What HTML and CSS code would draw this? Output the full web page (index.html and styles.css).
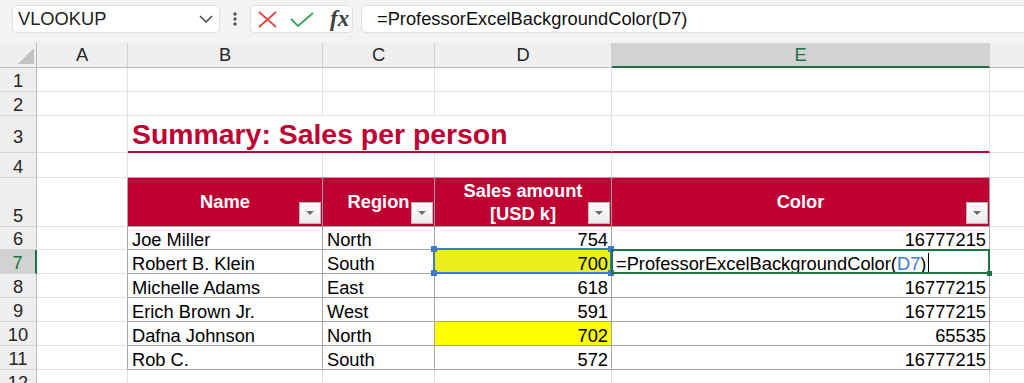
FILE: index.html
```html
<!DOCTYPE html>
<html lang="en">
<head>
  <meta charset="UTF-8">
  <meta name="viewport" content="width=device-width, initial-scale=1.0">
  <title>Summary: Sales per person</title>
  <link rel="stylesheet" href="styles.css">
</head>
<body>
  <!-- formula bar -->
  <div id="topbar">
    <div id="nameBox">
      <span>VLOOKUP</span>
      <svg width="14" height="8" viewBox="0 0 14 8"><polyline points="1,1 7,7 13,1" fill="none" stroke="#444" stroke-width="1.5"/></svg>
    </div>
    <div id="moreDots">
      <svg width="4" height="16" viewBox="0 0 4 16"><circle cx="2" cy="3" r="1.7" fill="#555"/><circle cx="2" cy="8" r="1.7" fill="#555"/><circle cx="2" cy="13" r="1.7" fill="#555"/></svg>
    </div>
    <div id="fxBox">
      <svg width="19" height="17" viewBox="0 0 19 17"><path d="M1 1 L18 16 M18 1 L1 16" stroke="#e2443c" stroke-width="1.7" fill="none"/></svg>
      <svg width="24" height="15" viewBox="0 0 24 15"><polyline points="1,7 8,14 23,1" fill="none" stroke="#3c9e5a" stroke-width="1.8"/></svg>
      <span class="fx">fx</span>
    </div>
    <div id="formulaInput">=ProfessorExcelBackgroundColor(D7)</div>
  </div>

  <!-- sheet -->
  <div id="sheet">
    <div class="corner"><svg width="16" height="16" viewBox="0 0 16 16"><polygon points="16,0 16,16 0,16" fill="#c2c2c2"/></svg></div>
    <div class="hd">A</div>
    <div class="hd">B</div>
    <div class="hd">C</div>
    <div class="hd">D</div>
    <div class="hd on">E</div>
    <div class="hd last"></div>

    <div class="rh">1</div>
    <div class="c"></div><div class="c"></div><div class="c"></div><div class="c"></div><div class="c"></div><div class="c last"></div>

    <div class="rh">2</div>
    <div class="c"></div><div class="c"></div><div class="c"></div><div class="c"></div><div class="c"></div><div class="c last"></div>

    <div class="rh tall">3</div>
    <div class="c"></div>
    <div class="c title">Summary: Sales per person</div>
    <div class="c uline"></div>
    <div class="c last"></div>

    <div class="rh">4</div>
    <div class="c"></div><div class="c top"></div><div class="c top"></div><div class="c top"></div><div class="c top"></div><div class="c last"></div>

    <div class="rh">5</div>
    <div class="c edge"></div>
    <div class="c th">Name<span class="flt"></span></div>
    <div class="c th">Region<span class="flt"></span></div>
    <div class="c th">Sales amount<br>[USD k]<span class="flt"></span></div>
    <div class="c th">Color<span class="flt"></span></div>
    <div class="c last"></div>

    <div class="rh">6</div>
    <div class="c edge"></div>
    <div class="c t">Joe Miller</div>
    <div class="c t">North</div>
    <div class="c t num">754</div>
    <div class="c t num">16777215</div>
    <div class="c last"></div>

    <div class="rh on">7</div>
    <div class="c edge"></div>
    <div class="c t">Robert B. Klein</div>
    <div class="c t">South</div>
    <div class="c t num ref-cell">700
      <div class="sel"><i class="hdl tl"></i><i class="hdl tr"></i><i class="hdl bl"></i><i class="hdl br"></i></div>
    </div>
    <div class="c t edit">=ProfessorExcelBackgroundColor(<span class="ref">D7</span>)<span class="caret"></span>
      <div class="act"><i class="fill"></i></div>
    </div>
    <div class="c last"></div>

    <div class="rh">8</div>
    <div class="c edge"></div>
    <div class="c t">Michelle Adams</div>
    <div class="c t">East</div>
    <div class="c t num">618</div>
    <div class="c t num">16777215</div>
    <div class="c last"></div>

    <div class="rh">9</div>
    <div class="c edge"></div>
    <div class="c t">Erich Brown Jr.</div>
    <div class="c t">West</div>
    <div class="c t num">591</div>
    <div class="c t num">16777215</div>
    <div class="c last"></div>

    <div class="rh">10</div>
    <div class="c edge"></div>
    <div class="c t">Dafna Johnson</div>
    <div class="c t">North</div>
    <div class="c t num yellow">702</div>
    <div class="c t num">65535</div>
    <div class="c last"></div>

    <div class="rh">11</div>
    <div class="c edge"></div>
    <div class="c t">Rob C.</div>
    <div class="c t">South</div>
    <div class="c t num">572</div>
    <div class="c t num">16777215</div>
    <div class="c last"></div>

    <div class="rh">12</div>
    <div class="c"></div><div class="c"></div><div class="c"></div><div class="c"></div><div class="c"></div><div class="c last"></div>
  </div>
</body>
</html>
```

FILE: styles.css
```css
/* base */
* {
  box-sizing: border-box;
}
body {
  margin: 0;
  font-family: "Liberation Sans", Arial, sans-serif;
  font-size: 18.3px;
  color: #000;
  background-color: #fff;
  overflow: hidden;
  height: 383px;
}

/* formula bar */
#topbar {
  height: 43px;
  background-color: #f3f3f3;
  display: flex;
  align-items: flex-start;
  padding: 5px 0 0 12px;
}
#nameBox {
  width: 208px;
  height: 28px;
  background-color: #fff;
  border: 1px solid #e1e1e1;
  border-radius: 5px;
  display: flex;
  align-items: center;
  justify-content: space-between;
  padding: 0 6px 0 5px;
  color: #222;
}
#moreDots {
  width: 30px;
  height: 28px;
  display: flex;
  align-items: center;
  justify-content: center;
}
#fxBox {
  width: 103px;
  height: 28px;
  background-color: #fff;
  border: 1px solid #e1e1e1;
  border-radius: 5px;
  display: flex;
  align-items: center;
  padding-left: 7px;
  gap: 13px;
}
#fxBox .fx {
  font-family: "Liberation Serif", "Times New Roman", serif;
  font-style: italic;
  font-weight: bold;
  font-size: 23px;
  color: #404040;
  margin-left: 3px;
}
#formulaInput {
  flex: 1;
  height: 28px;
  margin-left: 8px;
  margin-right: -10px;
  background-color: #fff;
  border: 1px solid #e1e1e1;
  border-radius: 5px;
  padding-left: 15px;
  line-height: 26px;
  color: #111;
}

/* grid of cells */
#sheet {
  display: grid;
  grid-template-columns: 37px 91px 195px 112px 177px 378px 1fr;
  grid-template-rows: 25px 24px 24px 37px 25px 49px 23px 24px 24px 24px 24px 24px 24px;
}
.corner {
  background-color: #efefef;
  border-right: 1px solid #b9b9b9;
  border-bottom: 1px solid #b9b9b9;
  display: flex;
  align-items: flex-end;
  justify-content: flex-end;
  padding: 0 2px 3px 0;
}
.hd {
  background-color: #efefef;
  border-right: 1px solid #d0d0d0;
  border-bottom: 1px solid #b9b9b9;
  display: flex;
  align-items: center;
  justify-content: center;
  color: #262626;
}
.hd.on {
  background-color: #d2d2d2;
  color: #217346;
  border-bottom: 2px solid #217346;
}
.rh {
  background-color: #efefef;
  border-right: 1px solid #b9b9b9;
  border-bottom: 1px solid #d6d6d6;
  display: flex;
  align-items: flex-end;
  justify-content: center;
  line-height: 17px;
  padding-bottom: 2px;
  color: #262626;
}
.rh.tall {
  padding-bottom: 7px;
}
.rh.on {
  background-color: #d2d2d2;
  color: #217346;
  border-right: 2px solid #217346;
}
.c {
  border-right: 1px solid #e1e1e1;
  border-bottom: 1px solid #e1e1e1;
  display: flex;
  align-items: flex-end;
  line-height: 17px;
  padding: 0 3px 1px 4px;
  white-space: nowrap;
}
.last {
  border-right: none;
}

/* title row */
.title {
  grid-column: span 3;
  color: #be0032;
  font-weight: bold;
  font-size: 28.4px;
  line-height: 33px;
  border-bottom: 2px solid #be0032;
  padding-left: 4px;
  padding-bottom: 0;
}
.uline {
  border-bottom: 2px solid #be0032;
}
.top {
  border-bottom-color: #a6a6a6;
}
.edge {
  border-right-color: #a6a6a6;
}

/* table */
.th {
  position: relative;
  background-color: #be0032;
  color: #fff;
  font-weight: bold;
  border-right-color: #9a9a9a;
  border-bottom-color: #a6a6a6;
  align-items: center;
  justify-content: center;
  text-align: center;
  line-height: 23px;
  padding: 0 0 1px 0;
}
.flt {
  position: absolute;
  right: 1px;
  bottom: 2px;
  width: 22px;
  height: 22px;
  border: 1px solid #b7b7b7;
  background: linear-gradient(#ffffff, #ebebeb);
}
.flt::after {
  content: "";
  position: absolute;
  left: 6px;
  top: 8px;
  border-left: 4px solid transparent;
  border-right: 4px solid transparent;
  border-top: 4px solid #6e6e6e;
}
.t {
  border-right-color: #a6a6a6;
  border-bottom-color: #a6a6a6;
}
.num {
  justify-content: flex-end;
}
.yellow {
  background-color: #ffff00;
}

/* cell referenced by the formula */
.ref-cell {
  position: relative;
  background-color: #ebef1b;
}
.sel {
  position: absolute;
  left: -2px;
  top: -2px;
  right: -1px;
  bottom: -1px;
  border: 2px solid #3c78d8;
}
.hdl {
  position: absolute;
  width: 6px;
  height: 6px;
  background-color: #3c78d8;
}
.hdl.tl { left: -4px; top: -4px; }
.hdl.tr { right: -4px; top: -4px; }
.hdl.bl { left: -4px; bottom: -4px; }
.hdl.br { right: -4px; bottom: -4px; }

/* cell being edited */
.edit {
  position: relative;
  padding-left: 4px;
}
.ref {
  color: #3c78d8;
}
.caret {
  display: inline-block;
  width: 1px;
  height: 19px;
  background-color: #000;
  vertical-align: -4px;
  margin-left: 2px;
}
.act {
  position: absolute;
  left: -1px;
  top: -1px;
  right: -1px;
  bottom: -1px;
  border: 2px solid #217346;
}
.fill {
  position: absolute;
  right: -4px;
  bottom: -4px;
  width: 5px;
  height: 5px;
  background-color: #217346;
}
```
